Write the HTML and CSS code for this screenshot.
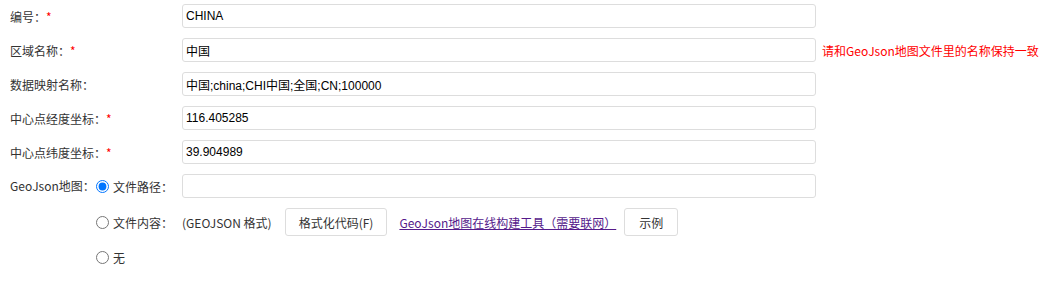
FILE: index.html
```html
<!doctype html>
<html lang="zh-CN">
<head>
    <meta charset="UTF-8">
    <title>区域编辑</title>
    <link rel="stylesheet" href="styles.css">
</head>
<body>
    <div class="form">
        <div class="row">
            <label class="lbl">编号：<span class="req">*</span></label>
            <input class="ipt" type="text" value="CHINA">
        </div>
        <div class="row">
            <label class="lbl">区域名称：<span class="req">*</span></label>
            <input class="ipt" type="text" value="中国">
            <span class="tip">请和GeoJson地图文件里的名称保持一致</span>
        </div>
        <div class="row">
            <label class="lbl">数据映射名称：</label>
            <input class="ipt" type="text" value="中国;china;CHI中国;全国;CN;100000">
        </div>
        <div class="row">
            <label class="lbl">中心点经度坐标：<span class="req">*</span></label>
            <input class="ipt" type="text" value="116.405285">
        </div>
        <div class="row">
            <label class="lbl">中心点纬度坐标：<span class="req">*</span></label>
            <input class="ipt" type="text" value="39.904989">
        </div>
        <div class="row geo">
            <label class="lbl short">GeoJson地图：</label>
            <div class="options">
                <div class="opt">
                    <label class="opt-lbl"><input type="radio" name="geo" checked>文件路径：</label>
                    <input class="ipt" type="text" value="">
                </div>
                <div class="opt">
                    <label class="opt-lbl"><input type="radio" name="geo">文件内容：</label>
                    <span class="fmt">(GEOJSON 格式)</span>
                    <button class="btn" type="button">格式化代码(F)</button>
                    <a class="link" href="#">GeoJson地图在线构建工具（需要联网）</a>
                    <button class="btn btn-sample" type="button">示例</button>
                </div>
                <div class="opt opt-none">
                    <label class="opt-lbl"><input type="radio" name="geo">无</label>
                </div>
            </div>
        </div>
    </div>
</body>
</html>
```

FILE: styles.css
```css
*{padding:0;margin:0;box-sizing:border-box;}

body{
    background:#fff;
    font-family:"Noto Sans CJK SC","Liberation Sans",sans-serif;
    font-size:12px;
    color:#333;
}
.form{
    padding:4px 0 0 10px;
    display:flex;
    flex-direction:column;
    gap:10px;
}
.row{
    display:flex;
    align-items:center;
    min-height:24px;
}
.row.geo{
    align-items:flex-start;
}
.lbl{
    width:172px;
    flex:none;
}
.lbl.short{
    width:86px;
    line-height:24px;
}
.req{
    color:#f00;
}
.ipt{
    width:634px;
    height:24px;
    border:1px solid #ddd;
    border-radius:3px;
    padding:0 3px;
    font-family:"Liberation Sans","Noto Sans CJK SC",sans-serif;
    font-size:12px;
    color:#000;
    outline:none;
}
.tip{
    margin-left:6px;
    color:#f00;
}

.options{
    display:flex;
    flex-direction:column;
    gap:10px;
}
.opt{
    display:flex;
    align-items:center;
    min-height:24px;
}
.opt-none{
    min-height:22px;
}
.opt-lbl{
    width:86px;
    display:flex;
    align-items:center;
}
.opt-lbl input{
    width:13px;
    height:13px;
    margin:0 4px 0 0;
}
.fmt{
    color:#333;
}
.btn{
    height:28px;
    padding:0 13px;
    margin-left:13px;
    background:#fff;
    border:1px solid #ddd;
    border-radius:3px;
    font-family:"Noto Sans CJK SC","Liberation Sans",sans-serif;
    font-size:12px;
    color:#333;
}
.link{
    margin-left:12px;
    color:#551a8b;
    text-decoration:underline;
}
.btn-sample{
    margin-left:8px;
    padding:0 14px;
}
```
